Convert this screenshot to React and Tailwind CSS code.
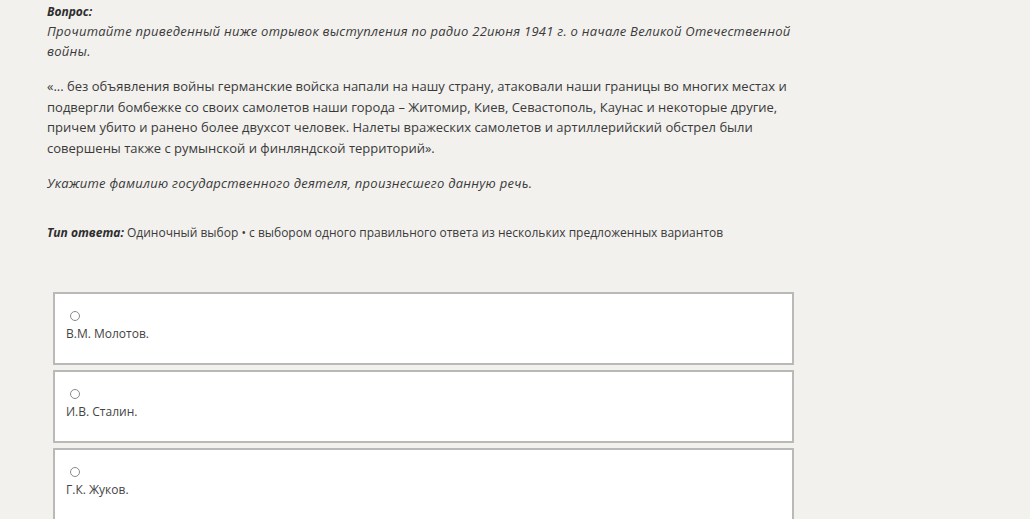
export default function App() {
  const options = ["В.М. Молотов.", "И.В. Сталин.", "Г.К. Жуков."];
  return (
    <div
      className="w-[1030px] h-[519px] overflow-hidden bg-[#f2f1ee] text-[#3a3a3a]"
      style={{ fontFamily: '"Open Sans", "Noto Sans", sans-serif' }}
    >
      <div className="pl-[47px] pt-[3px] w-[800px]">
        <div className="text-[12px] leading-[17px] font-bold italic text-[#2d2d2d]">Вопрос:</div>
        <p className="text-[13px] leading-[20px] italic tracking-[0.25px] mt-[1px]">
          Прочитайте приведенный ниже отрывок выступления по радио 22июня 1941 г. о начале Великой Отечественной
          войны.
        </p>
        <p className="text-[13px] leading-[20.7px] mt-[15px]">
          «... без объявления войны германские войска напали на нашу страну, атаковали наши границы во многих местах и
          подвергли бомбежке со своих самолетов наши города – Житомир, Киев, Севастополь, Каунас и некоторые другие,
          причем убито и ранено более двухсот человек. Налеты вражеских самолетов и артиллерийский обстрел были
          совершены также с румынской и финляндской территорий».
        </p>
        <p className="text-[13px] leading-[20px] italic tracking-[0.25px] mt-[14px]">
          Укажите фамилию государственного деятеля, произнесшего данную речь.
        </p>
        <p className="text-[12px] leading-[18px] mt-[31px]">
          <span className="font-bold italic text-[#2d2d2d]">Тип ответа:</span> Одиночный выбор • с выбором одного
          правильного ответа из нескольких предложенных вариантов
        </p>
      </div>
      <div className="ml-[53px] mt-[50px] w-[741px] flex flex-col gap-[5px]">
        {options.map((o) => (
          <div key={o} className="h-[73px] bg-white border-2 border-[#b9b9b7] pl-[11px] pt-[17px]">
            <div className="ml-[4px] w-[10px] h-[10px] rounded-full border border-[#8a8a8a]" />
            <div className="text-[12px] leading-[18px] mt-[4px] text-[#444]">{o}</div>
          </div>
        ))}
      </div>
    </div>
  );
}
